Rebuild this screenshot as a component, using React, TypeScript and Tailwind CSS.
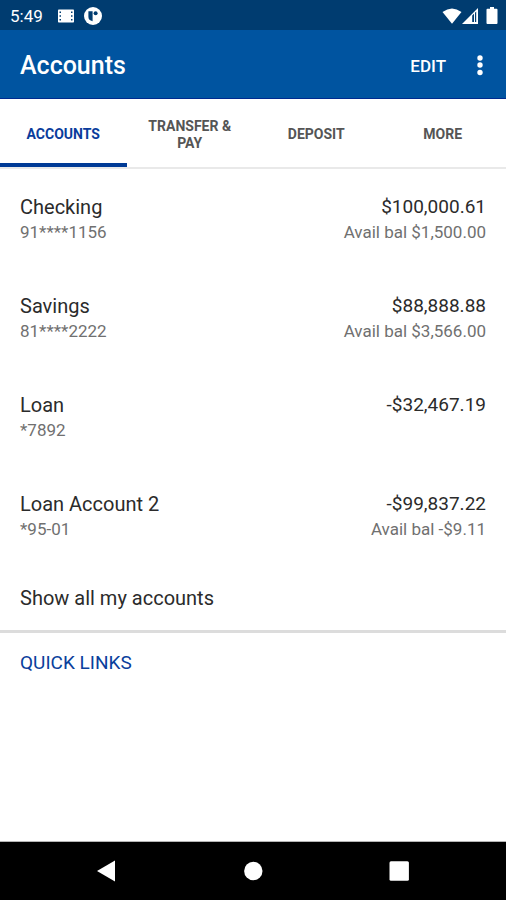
interface Account {
  name: string;
  number: string;
  balance: string;
  available?: string;
}

const accounts: Account[] = [
  { name: "Checking", number: "91****1156", balance: "$100,000.61", available: "Avail bal $1,500.00" },
  { name: "Savings", number: "81****2222", balance: "$88,888.88", available: "Avail bal $3,566.00" },
  { name: "Loan", number: "*7892", balance: "-$32,467.19" },
  { name: "Loan Account 2", number: "*95-01", balance: "-$99,837.22", available: "Avail bal -$9.11" },
];

const tabs = ["Accounts", "Transfer & Pay", "Deposit", "More"];

function StatusBar() {
  return (
    <div className="flex h-[30px] items-center bg-[#003c70] pt-px pr-2 pl-[10px] text-white">
      <span className="text-[17px] leading-5">5:49</span>
      {/* Notification icons */}
      <svg className="ml-[15px]" width="16" height="14" viewBox="0 0 16 14" aria-hidden="true">
        <rect width="16" height="13" y="0.5" rx="0.8" fill="#fff" />
        <path
          d="M1.5 2.5h1.5v1.5h-1.5zM1.5 6.2h1.5v1.5h-1.5zM1.5 10h1.5v1.5h-1.5zM13 2.5h1.5v1.5h-1.5zM13 6.2h1.5v1.5h-1.5zM13 10h1.5v1.5h-1.5z"
          fill="#003c70"
        />
      </svg>
      <svg className="ml-[10px]" width="18" height="18" viewBox="0 0 18 18" aria-hidden="true">
        <circle cx="9" cy="9" r="9" fill="#fff" />
        <path d="M4.4 4.2h4.2v10q-4.2-.8-4.2-4.4z" fill="#003c70" />
        <circle cx="11.6" cy="6.2" r="2" fill="#003c70" />
      </svg>
      <div className="ml-auto flex items-center">
        <svg width="20" height="16" viewBox="0 0 20 16" aria-hidden="true">
          <path d="M0.5 3.9Q10-3.1 19.5 3.9L10 15.8z" fill="#fff" />
        </svg>
        <svg width="16" height="16" viewBox="0 0 16 16" aria-hidden="true">
          <path d="M16 0v16H0z" fill="#fff" />
          <path d="M10.2 7.6L12 5.8V14h-1.8zM13 4.8l1.2-1.2V14H13z" fill="#003c70" />
          <path d="M12 6h1v8h-1z" fill="#fff" />
        </svg>
        <svg className="ml-2" width="12" height="17" viewBox="0 0 12 17" aria-hidden="true">
          <path d="M4 0h4v1.8h2.6q.9 0 .9.9v13.3q0 .9-.9.9H1.4q-.9 0-.9-.9V2.7q0-.9.9-.9H4z" fill="#fff" />
        </svg>
      </div>
    </div>
  );
}

function AppBar() {
  return (
    <header className="flex h-[69px] items-center border-b border-[#002a8f] bg-[#0054a0] pt-[3px] pr-4 pl-5 text-white">
      <h1 className="text-[25px] leading-8 font-medium">Accounts</h1>
      <button className="ml-auto text-[17px] leading-6 font-medium uppercase">Edit</button>
      <button className="ml-6 flex h-10 w-5 items-center justify-center" aria-label="More options">
        <svg width="6" height="22" viewBox="0 0 6 22" fill="#fff" aria-hidden="true">
          <circle cx="3" cy="3" r="2.7" />
          <circle cx="3" cy="10" r="2.7" />
          <circle cx="3" cy="17.5" r="2.7" />
        </svg>
      </button>
    </header>
  );
}

function Tabs() {
  return (
    <nav className="grid h-[70px] grid-cols-4 border-b-2 border-[#e9e9e9]" role="tablist">
      {tabs.map((tab, i) => (
        <button
          key={tab}
          role="tab"
          aria-selected={i === 0}
          className={`border-b-4 px-4 pt-[7px] text-sm leading-[17px] font-bold uppercase ${
            i === 0 ? "border-[#003a96] text-[#0a3c9c]" : "border-transparent text-[#555]"
          }`}
        >
          {tab}
        </button>
      ))}
    </nav>
  );
}

function AccountRow({ account }: { account: Account }) {
  return (
    <li className="flex h-[99px] justify-between px-5 pt-[25px]">
      <div>
        <p className="text-xl leading-[26px] text-[#2b2b2b]">{account.name}</p>
        <p className="text-[17px] leading-6 text-[#707070]">{account.number}</p>
      </div>
      <div className="text-right">
        <p className="text-[19px] leading-[26px] text-[#2b2b2b]">{account.balance}</p>
        {account.available && <p className="text-[17px] leading-6 text-[#707070]">{account.available}</p>}
      </div>
    </li>
  );
}

function SystemNav() {
  return (
    <div className="flex h-[59px] items-center justify-center gap-[126px] border-t border-[#b5b5b5] bg-black">
      <button className="flex w-5 justify-center" aria-label="Back">
        <svg width="20" height="22" viewBox="0 0 20 22" aria-hidden="true">
          <path d="M0 11L18 0.5v21z" fill="#fff" />
        </svg>
      </button>
      <button className="flex w-5 justify-center" aria-label="Home">
        <svg width="20" height="20" viewBox="0 0 20 20" aria-hidden="true">
          <circle cx="10.3" cy="10" r="9.2" fill="#fff" />
        </svg>
      </button>
      <button className="flex w-5 justify-center" aria-label="Recent apps">
        <svg width="20" height="20" viewBox="0 0 20 20" aria-hidden="true">
          <rect x="0.5" y="0.3" width="19.4" height="19.4" rx="1.5" fill="#fff" />
        </svg>
      </button>
    </div>
  );
}

function App() {
  return (
    <div className="flex min-h-screen flex-col bg-white font-['Roboto',sans-serif]">
      <StatusBar />
      <AppBar />
      <Tabs />
      <main className="flex-1">
        <ul>
          {accounts.map((account) => (
            <AccountRow key={account.name} account={account} />
          ))}
        </ul>
        <button className="flex h-[68px] w-full items-center border-b-3 border-[#dcdcdc] px-5 text-xl text-[#2b2b2b]">
          Show all my accounts
        </button>
        <h2 className="px-5 pt-4 text-[19px] leading-7 text-[#0a409c] uppercase">Quick links</h2>
      </main>
      <SystemNav />
    </div>
  );
}

export default App;
